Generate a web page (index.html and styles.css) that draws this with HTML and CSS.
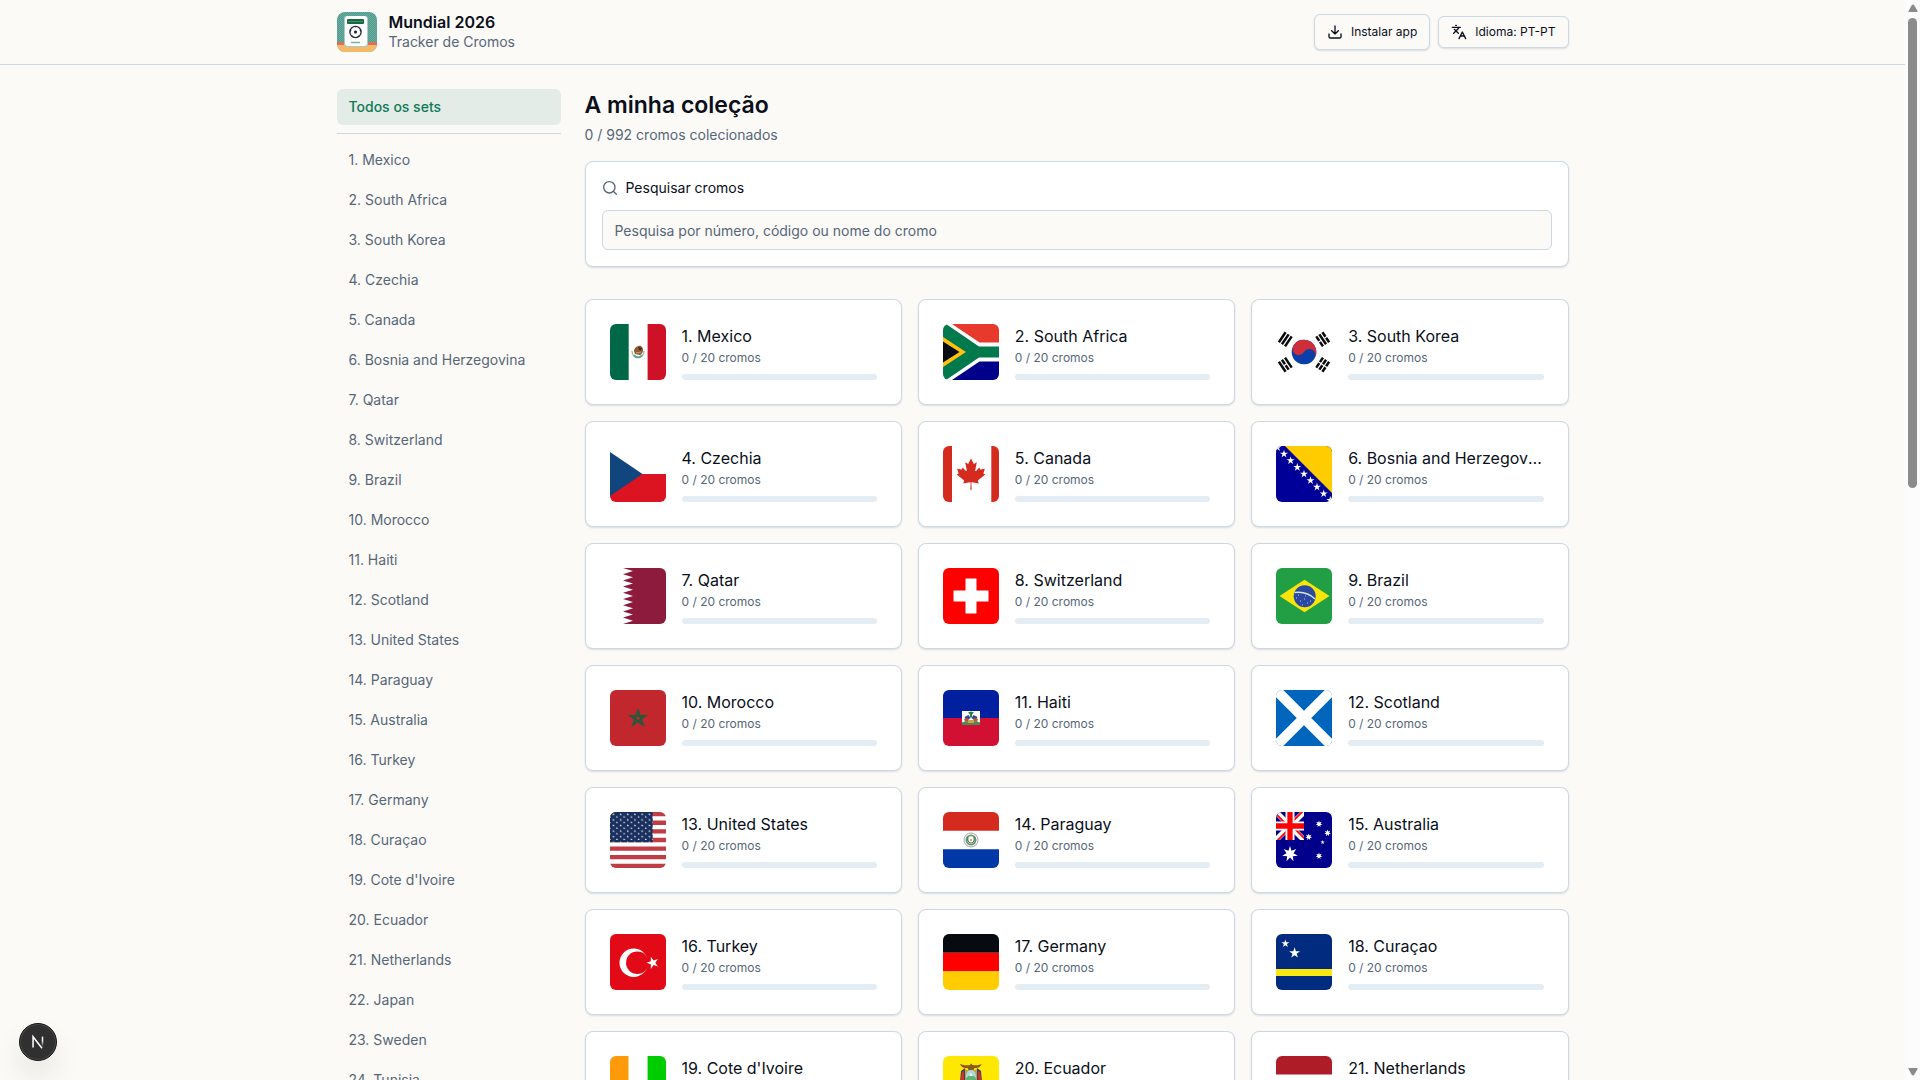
FILE: index.html
```html
<!DOCTYPE html>
<html lang="pt-PT">
<head>
<meta charset="utf-8">
<meta name="viewport" content="width=device-width, initial-scale=1">
<title>Mundial 2026 - Tracker de Cromos</title>
<link rel="stylesheet" href="styles.css">
</head>
<body>
<svg class="defs" aria-hidden="true">
  <defs>
    <polygon id="star5" points="0,-10 2.25,-3.09 9.51,-3.09 3.63,1.18 5.88,8.09 0,3.82 -5.88,8.09 -3.63,1.18 -9.51,-3.09 -2.25,-3.09"/>
    <polygon id="star7" points="0,-10 1.95,-4.05 7.82,-6.23 4.39,-1 9.75,2.23 3.52,2.8 4.34,9.01 0,4.5 -4.34,9.01 -3.52,2.8 -9.75,2.23 -4.39,-1 -7.82,-6.23 -1.95,-4.05"/>
    <pattern id="us-stars" width="7.2" height="5.6" patternUnits="userSpaceOnUse">
      <rect width="7.2" height="5.6" fill="#192f5d"/>
      <use href="#star5" transform="translate(3.4 2.2) scale(.13)" fill="#fff"/>
      <use href="#star5" transform="translate(7 5) scale(.13)" fill="#fff"/>
      <use href="#star5" transform="translate(-.2 5) scale(.13)" fill="#fff"/>
    </pattern>
    <pattern id="weave" width="2" height="2" patternUnits="userSpaceOnUse">
      <rect width="2" height="2" fill="#68ac9f"/>
      <path d="M0 0h1v1H0zM1 1h1v1H1z" fill="#559b90"/>
    </pattern>
  </defs>
</svg>
<div class="page">
  <header class="topbar">
    <div class="container topbar-row">
      <a class="brand" href="#">
        <svg class="brand-logo" viewBox="0 0 40 40" aria-hidden="true">
          <rect width="40" height="40" fill="url(#weave)"/>
          <path d="M0 30h40v3H0z" fill="#d9705c"/>
          <path d="M0 33h40v7H0z" fill="#f6b968"/>
          <rect x="7" y="4" width="24" height="31" rx="3" fill="#a9cdc5"/>
          <rect x="8" y="4" width="22" height="30" rx="3" fill="#fdfefe"/>
          <rect x="10" y="7" width="17" height="5" rx="1" fill="#1c6340"/>
          <path d="M11 9.500h15" stroke="#2f9a62"/>
          <circle cx="18.500" cy="20" r="5.600" fill="#fff" stroke="#22272f" stroke-width="1.300"/>
          <path d="M18.500 18.300l1.700 1.300-.7 2h-2l-.7-2zM17 14.200l1.500 1.300 1.500-1.300zM24 17.600l-1.600 1 1.600 1.400zM13 17.600l1.600 1-1.600 1.400zM15 25l.6-1.800 1.300 2zM22 25l-.6-1.800-1.300 2z" fill="#22272f"/>
          <path d="M14 30.500h9" stroke="#7fb3a8" stroke-width="1.500"/>
        </svg>
        <span class="brand-text">
          <span class="brand-name">Mundial 2026</span>
          <span class="brand-sub">Tracker de Cromos</span>
        </span>
      </a>
      <div class="actions">
        <button class="btn btn-tall" type="button">
          <svg class="icon" viewBox="0 0 24 24" aria-hidden="true"><path d="M12 3v12M7 10l5 5 5-5M21 15v4a2 2 0 0 1-2 2H5a2 2 0 0 1-2-2v-4"/></svg>
          Instalar app
        </button>
        <button class="btn" type="button">
          <svg class="icon" viewBox="0 0 24 24" aria-hidden="true"><path d="m5 8 6 6M4 14l6-6 2-3M2 5h12M7 2h1M22 22l-5-10-5 10M14 18h6"/></svg>
          Idioma: PT-PT
        </button>
      </div>
    </div>
  </header>

  <div class="container layout">
    <nav class="sidebar" aria-label="Sets">
      <a class="side-link side-link-active" href="#">Todos os sets</a>
      <div class="side-list">
        <a class="side-link" href="#">1. Mexico</a>
        <a class="side-link" href="#">2. South Africa</a>
        <a class="side-link" href="#">3. South Korea</a>
        <a class="side-link" href="#">4. Czechia</a>
        <a class="side-link" href="#">5. Canada</a>
        <a class="side-link" href="#">6. Bosnia and Herzegovina</a>
        <a class="side-link" href="#">7. Qatar</a>
        <a class="side-link" href="#">8. Switzerland</a>
        <a class="side-link" href="#">9. Brazil</a>
        <a class="side-link" href="#">10. Morocco</a>
        <a class="side-link" href="#">11. Haiti</a>
        <a class="side-link" href="#">12. Scotland</a>
        <a class="side-link" href="#">13. United States</a>
        <a class="side-link" href="#">14. Paraguay</a>
        <a class="side-link" href="#">15. Australia</a>
        <a class="side-link" href="#">16. Turkey</a>
        <a class="side-link" href="#">17. Germany</a>
        <a class="side-link" href="#">18. Curaçao</a>
        <a class="side-link" href="#">19. Cote d'Ivoire</a>
        <a class="side-link" href="#">20. Ecuador</a>
        <a class="side-link" href="#">21. Netherlands</a>
        <a class="side-link" href="#">22. Japan</a>
        <a class="side-link" href="#">23. Sweden</a>
        <a class="side-link" href="#">24. Tunisia</a>
      </div>
    </nav>

    <main class="main">
      <div class="heading">
        <h1 class="title">A minha coleção</h1>
        <p class="summary">0 / 992 cromos colecionados</p>
      </div>

      <form class="search" role="search">
        <label class="search-label" for="q">
          <svg class="icon icon-muted" viewBox="0 0 24 24" aria-hidden="true"><circle cx="11" cy="11" r="8.500"/><path d="m21.500 21.500-4.500-4.500"/></svg>
          Pesquisar cromos
        </label>
        <input class="search-input" id="q" type="text" placeholder="Pesquisa por número, código ou nome do cromo">
      </form>

      <div class="grid">
        <a class="card" href="#">
          <svg class="flag" viewBox="0 0 56 56" aria-hidden="true"><path fill="#fff" d="M0 0h56v56H0z"/><path fill="#006847" d="M0 0h18.700v56H0z"/><path fill="#ce1126" d="M37.600 0H56v56H37.600z"/><path d="M22 27c0 9 12 9 12 0" fill="none" stroke="#a8b59a" stroke-width="1.300"/><path d="M24 31c2 3 6 3 8 0" fill="none" stroke="#4fa79b" stroke-width="1.500"/><path d="M24 27c0-4 6-7 8-4 2 2 1 7-2 8l-5-1z" fill="#8f5a35"/><path d="M28 23l4 1-2 3z" fill="#3b2718"/><path d="M26 29l5-1" stroke="#c8a878"/></svg>
          <div class="info"><h2 class="name">1. Mexico</h2><p class="count">0 / 20 cromos</p><div class="bar" role="progressbar" aria-valuenow="0" aria-valuemax="20"></div></div>
        </a>
        <a class="card" href="#">
          <svg class="flag" viewBox="0 0 56 56" aria-hidden="true"><path fill="#fff" d="M0 0h56v56H0z"/><path fill="#e8392d" d="M9 0h47v18.500H36.500z"/><path fill="#00008b" d="M9 56h47V37.500H36.500z"/><path fill="#007a4d" d="M0 0h3l33 22.500h20v11H36L3 56H0z"/><path fill="#ffc20e" d="M0 13l23 15L0 43z"/><path fill="#070b12" d="M0 17.500L16.500 28 0 38.500z"/></svg>
          <div class="info"><h2 class="name">2. South Africa</h2><p class="count">0 / 20 cromos</p><div class="bar" role="progressbar" aria-valuenow="0" aria-valuemax="20"></div></div>
        </a>
        <a class="card" href="#">
          <svg class="flag" viewBox="0 0 56 56" aria-hidden="true"><path fill="#fff" d="M0 0h56v56H0z"/><g transform="rotate(30 28 28)"><circle cx="28" cy="28" r="12.300" fill="#0a3ea8"/><path fill="#cd2e3a" d="M15.700 28a12.300 12.300 0 0 1 24.600 0 6.150 6.150 0 0 0-12.300 0 6.150 6.150 0 0 1-12.300 0z"/></g><g stroke="#0b0b0f" stroke-width="2.500"><path transform="translate(9.300 15.300) rotate(-56)" d="M-6-3.700H6M-6 0H6M-6 3.700H6"/><path transform="translate(46.700 40.700) rotate(-56)" d="M-6-3.700h5.400M.6-3.700H6M-6 0h5.400M.6 0H6M-6 3.700h5.400M.6 3.700H6"/><path transform="translate(46.700 15.300) rotate(56)" d="M-6-3.700h5.400M.6-3.700H6M-6 0H6M-6 3.700h5.400M.6 3.700H6"/><path transform="translate(9.300 40.700) rotate(56)" d="M-6-3.700H6M-6 0h5.400M.6 0H6M-6 3.700H6"/></g></svg>
          <div class="info"><h2 class="name">3. South Korea</h2><p class="count">0 / 20 cromos</p><div class="bar" role="progressbar" aria-valuenow="0" aria-valuemax="20"></div></div>
        </a>
        <a class="card" href="#">
          <svg class="flag" viewBox="0 0 56 56" aria-hidden="true"><path fill="#fff" d="M0 0h56v28H0z"/><path fill="#dc1320" d="M0 28h56v28H0z"/><path fill="#11457e" d="M0 6l32.500 22L0 50z"/></svg>
          <div class="info"><h2 class="name">4. Czechia</h2><p class="count">0 / 20 cromos</p><div class="bar" role="progressbar" aria-valuenow="0" aria-valuemax="20"></div></div>
        </a>
        <a class="card" href="#">
          <svg class="flag" viewBox="0 0 56 56" aria-hidden="true"><path fill="#fff" d="M0 0h56v56H0z"/><path fill="#d52b1e" d="M0 0h9v56H0zM48.300 0H56v56h-7.700z"/><path fill="#d52b1e" transform="translate(28 28) scale(.0077)" d="m-90 2030 45-863a95 95 0 0 0-111-98l-859 151 116-320a65 65 0 0 0-20-73l-941-762 212-99a65 65 0 0 0 34-79l-186-572 542 115a65 65 0 0 0 73-38l105-247 423 454a65 65 0 0 0 111-57l-204-1052 327 189a65 65 0 0 0 91-27l332-652 332 652a65 65 0 0 0 91 27l327-189-204 1052a65 65 0 0 0 111 57l423-454 105 247a65 65 0 0 0 73 38l542-115-186 572a65 65 0 0 0 34 79l212 99-941 762a65 65 0 0 0-20 73l116 320-859-151a95 95 0 0 0-111 98l45 863z"/></svg>
          <div class="info"><h2 class="name">5. Canada</h2><p class="count">0 / 20 cromos</p><div class="bar" role="progressbar" aria-valuenow="0" aria-valuemax="20"></div></div>
        </a>
        <a class="card" href="#">
          <svg class="flag" viewBox="0 0 56 56" aria-hidden="true"><path fill="#009" d="M0 0h56v56H0z"/><path fill="#fc0" d="M9 0h47v47z"/><g fill="#fff"><use href="#star5" transform="translate(1.500 1.500) scale(.42)"/><use href="#star5" transform="translate(8 8) scale(.42)"/><use href="#star5" transform="translate(14.600 14.600) scale(.42)"/><use href="#star5" transform="translate(21.300 21.300) scale(.42)"/><use href="#star5" transform="translate(28 28) scale(.42)"/><use href="#star5" transform="translate(34.500 34.500) scale(.42)"/><use href="#star5" transform="translate(41 41) scale(.42)"/><use href="#star5" transform="translate(47.700 47.700) scale(.42)"/><use href="#star5" transform="translate(54.300 54.300) scale(.42)"/></g></svg>
          <div class="info"><h2 class="name">6. Bosnia and Herzegovina</h2><p class="count">0 / 20 cromos</p><div class="bar" role="progressbar" aria-valuenow="0" aria-valuemax="20"></div></div>
        </a>
        <a class="card" href="#">
          <svg class="flag" viewBox="0 0 56 56" aria-hidden="true"><path fill="#fff" d="M0 0h56v56H0z"/><path fill="#8d1b3d" d="M56 0H13l10 3.100-10 3.100 10 3.100-10 3.100 10 3.100-10 3.100 10 3.100-10 3.100 10 3.100-10 3.100 10 3.100-10 3.100 10 3.100-10 3.100 10 3.100-10 3.100 10 3.100-10 3.200h43z"/></svg>
          <div class="info"><h2 class="name">7. Qatar</h2><p class="count">0 / 20 cromos</p><div class="bar" role="progressbar" aria-valuenow="0" aria-valuemax="20"></div></div>
        </a>
        <a class="card" href="#">
          <svg class="flag" viewBox="0 0 56 56" aria-hidden="true"><path fill="red" d="M0 0h56v56H0z"/><path fill="#fff" d="M22.500 10.500h11v12h12v11h-12v12h-11v-12h-12v-11h12z"/></svg>
          <div class="info"><h2 class="name">8. Switzerland</h2><p class="count">0 / 20 cromos</p><div class="bar" role="progressbar" aria-valuenow="0" aria-valuemax="20"></div></div>
        </a>
        <a class="card" href="#">
          <svg class="flag" viewBox="0 0 56 56" aria-hidden="true"><path fill="#229e45" d="M0 0h56v56H0z"/><path fill="#f8e509" d="M3.500 28l25-16.300 25 16.300-25 16.300z"/><circle cx="28.700" cy="28.200" r="11" fill="#2b49a3"/><path d="M18.500 24.500c7-1 15 1 20.500 6.500" fill="none" stroke="#d8e6da" stroke-width="1.500"/><path d="M20 30h1M24 33h1M28 31h1M31 35h1M26 37h1M34 33h1M29 28h1M22 27h1" stroke="#b9c5e6"/></svg>
          <div class="info"><h2 class="name">9. Brazil</h2><p class="count">0 / 20 cromos</p><div class="bar" role="progressbar" aria-valuenow="0" aria-valuemax="20"></div></div>
        </a>
        <a class="card" href="#">
          <svg class="flag" viewBox="0 0 56 56" aria-hidden="true"><path fill="#c1272d" d="M0 0h56v56H0z"/><path fill="none" stroke="#1d5b3a" stroke-width="1.800" d="M28 20.500l4.900 14.200-12.300-8.900h14.800l-12.300 8.900z"/></svg>
          <div class="info"><h2 class="name">10. Morocco</h2><p class="count">0 / 20 cromos</p><div class="bar" role="progressbar" aria-valuenow="0" aria-valuemax="20"></div></div>
        </a>
        <a class="card" href="#">
          <svg class="flag" viewBox="0 0 56 56" aria-hidden="true"><path fill="#00209f" d="M0 0h56v28H0z"/><path fill="#d21034" d="M0 28h56v28H0z"/><path fill="#fff" d="M19 21h18v14H19z"/><path fill="#4d8a50" d="M19 32.500c5-2 13-2 18 0V35H19z"/><path fill="#2c7a45" d="M25 22.500l3-1 3 1-2 2v3h-2v-3z"/><path fill="#3a4488" d="M21.500 27l4-2 2 3-4 3zM34.500 27l-4-2-2 3 4 3z"/><path fill="#b5563f" d="M21 29l4-1 1 3-4 1zM35 29l-4-1-1 3 4 1z"/><path fill="#c5a44a" d="M25 30h6v3h-6z"/></svg>
          <div class="info"><h2 class="name">11. Haiti</h2><p class="count">0 / 20 cromos</p><div class="bar" role="progressbar" aria-valuenow="0" aria-valuemax="20"></div></div>
        </a>
        <a class="card" href="#">
          <svg class="flag" viewBox="0 0 56 56" aria-hidden="true"><path fill="#0065bd" d="M0 0h56v56H0z"/><path stroke="#fff" stroke-width="10.200" d="M-2-2l60 60M58-2L-2 58"/></svg>
          <div class="info"><h2 class="name">12. Scotland</h2><p class="count">0 / 20 cromos</p><div class="bar" role="progressbar" aria-valuenow="0" aria-valuemax="20"></div></div>
        </a>
        <a class="card" href="#">
          <svg class="flag" viewBox="0 0 56 56" aria-hidden="true"><path fill="#fff" d="M0 0h56v56H0z"/><path stroke="#bf3d45" stroke-width="4.300" d="M0 2.150h56M0 10.750h56M0 19.400h56M0 28h56M0 36.600h56M0 45.200h56M0 53.850h56"/><path fill="url(#us-stars)" d="M0 0h42.700v30.200H0z"/></svg>
          <div class="info"><h2 class="name">13. United States</h2><p class="count">0 / 20 cromos</p><div class="bar" role="progressbar" aria-valuenow="0" aria-valuemax="20"></div></div>
        </a>
        <a class="card" href="#">
          <svg class="flag" viewBox="0 0 56 56" aria-hidden="true"><path fill="#fff" d="M0 0h56v56H0z"/><path fill="#d52b1e" d="M0 0h56v18.700H0z"/><path fill="#0038a8" d="M0 37.300h56V56H0z"/><circle cx="28" cy="28" r="7" fill="none" stroke="#8b938c" stroke-width=".8"/><circle cx="28" cy="28" r="4.600" fill="none" stroke="#74907c" stroke-width="1.800"/><path d="M25 25c-1 4 1 6 3 6s4-2 3-6" fill="none" stroke="#2d8054" stroke-width="1.200"/><circle cx="28" cy="28" r="1.200" fill="#e2b53a"/></svg>
          <div class="info"><h2 class="name">14. Paraguay</h2><p class="count">0 / 20 cromos</p><div class="bar" role="progressbar" aria-valuenow="0" aria-valuemax="20"></div></div>
        </a>
        <a class="card" href="#">
          <svg class="flag" viewBox="0 0 56 56" aria-hidden="true"><path fill="#00008b" d="M0 0h56v56H0z"/><svg width="28" height="28"><path stroke="#fff" stroke-width="5.600" d="M0 0l28 28M28 0L0 28"/><path stroke="red" stroke-width="1.800" d="M-1 1l14 14M29 27L15 13M27-1L13 13M1 29l14-14"/><path stroke="#fff" stroke-width="9" d="M14 0v28M0 14h28"/><path stroke="red" stroke-width="5.300" d="M14 0v28M0 14h28"/></svg><g fill="#fff"><use href="#star7" transform="translate(14 42) scale(.8)"/><use href="#star7" transform="translate(43 12) scale(.35)"/><use href="#star7" transform="translate(51.600 21) scale(.35)"/><use href="#star7" transform="translate(32.700 25) scale(.35)"/><use href="#star5" transform="translate(46.600 30.300) scale(.22)"/><use href="#star7" transform="translate(43 44) scale(.35)"/></g></svg>
          <div class="info"><h2 class="name">15. Australia</h2><p class="count">0 / 20 cromos</p><div class="bar" role="progressbar" aria-valuenow="0" aria-valuemax="20"></div></div>
        </a>
        <a class="card" href="#">
          <svg class="flag" viewBox="0 0 56 56" aria-hidden="true"><path fill="#e30a17" d="M0 0h56v56H0z"/><circle cx="23.700" cy="28.800" r="14.200" fill="#fff"/><circle cx="27.300" cy="28.800" r="11.300" fill="#e30a17"/><use href="#star5" transform="translate(42.800 28.800) rotate(-90) scale(.64)" fill="#fff"/></svg>
          <div class="info"><h2 class="name">16. Turkey</h2><p class="count">0 / 20 cromos</p><div class="bar" role="progressbar" aria-valuenow="0" aria-valuemax="20"></div></div>
        </a>
        <a class="card" href="#">
          <svg class="flag" viewBox="0 0 56 56" aria-hidden="true"><path fill="#070a0f" d="M0 0h56v18.700H0z"/><path fill="red" d="M0 18.700h56v18.700H0z"/><path fill="#fc0" d="M0 37.300h56V56H0z"/></svg>
          <div class="info"><h2 class="name">17. Germany</h2><p class="count">0 / 20 cromos</p><div class="bar" role="progressbar" aria-valuenow="0" aria-valuemax="20"></div></div>
        </a>
        <a class="card" href="#">
          <svg class="flag" viewBox="0 0 56 56" aria-hidden="true"><path fill="#002b7f" d="M0 0h56v56H0z"/><path fill="#f9e814" d="M0 35h56v7H0z"/><g fill="#fff"><use href="#star5" transform="translate(9.400 9.600) scale(.42)"/><use href="#star5" transform="translate(18.600 19) scale(.57)"/></g></svg>
          <div class="info"><h2 class="name">18. Curaçao</h2><p class="count">0 / 20 cromos</p><div class="bar" role="progressbar" aria-valuenow="0" aria-valuemax="20"></div></div>
        </a>
        <a class="card" href="#">
          <svg class="flag" viewBox="0 0 56 56" aria-hidden="true"><path fill="#fff" d="M0 0h56v56H0z"/><path fill="#ff9a0a" d="M0 0h18.500v56H0z"/><path fill="#00cd00" d="M37.600 0H56v56H37.600z"/></svg>
          <div class="info"><h2 class="name">19. Cote d'Ivoire</h2><p class="count">0 / 20 cromos</p><div class="bar" role="progressbar" aria-valuenow="0" aria-valuemax="20"></div></div>
        </a>
        <a class="card" href="#">
          <svg class="flag" viewBox="0 0 56 56" aria-hidden="true"><path fill="#ffe800" d="M0 0h56v28H0z"/><path fill="#0072c6" d="M0 28h56v14H0z"/><path fill="#e2001a" d="M0 42h56v14H0z"/><path fill="#8a5a1c" d="M17 8c5 2 8 1 10 1l1-1.500 1.500 1.500c2 0 5 1 9-1-1 4-5 4-7 4l-1 2h-5l-1-2c-3 0-6 0-7.500-4z"/><path fill="#3a3f7a" d="M18 15l4-3 2 14h-7zM38 15l-4-3-2 14h7z"/><path fill="#c4352f" d="M19 16l2-1v11h-4zM37 16l-2-1v11h4z"/><path fill="#c9a227" d="M22 14h12v14H22z"/><path fill="#a6dbe6" d="M28 14c4 0 5 4 5 8v6H23v-6c0-4 1-8 5-8z"/><path fill="#5fb36a" d="M23 22l5-4 5 4v6H23z"/><path fill="#fff" d="M26 20l2-3 2 3z"/></svg>
          <div class="info"><h2 class="name">20. Ecuador</h2><p class="count">0 / 20 cromos</p><div class="bar" role="progressbar" aria-valuenow="0" aria-valuemax="20"></div></div>
        </a>
        <a class="card" href="#">
          <svg class="flag" viewBox="0 0 56 56" aria-hidden="true"><path fill="#fff" d="M0 0h56v56H0z"/><path fill="#ae1c28" d="M0 0h56v18.500H0z"/><path fill="#21468b" d="M0 37.300h56V56H0z"/></svg>
          <div class="info"><h2 class="name">21. Netherlands</h2><p class="count">0 / 20 cromos</p><div class="bar" role="progressbar" aria-valuenow="0" aria-valuemax="20"></div></div>
        </a>
      </div>
    </main>
  </div>
</div>

<div class="scrollbar" aria-hidden="true">
  <svg class="scroll-arrow" viewBox="0 0 10 8"><path d="M4 .8h2L9.500 7v1h-9V7z"/></svg>
  <div class="scroll-track"><div class="scroll-thumb"></div></div>
  <svg class="scroll-arrow" viewBox="0 0 10 8"><path d="M.5 0h9v1L6 7.200H4L.5 1z"/></svg>
</div>

<button class="dev-badge" type="button" aria-label="Next.js">
  <svg viewBox="0 0 40 40" aria-hidden="true">
    <defs>
      <linearGradient id="fade-a" x1="0" y1="0" x2="0" y2="1"><stop offset=".4" stop-color="#fff"/><stop offset="1" stop-color="#fff" stop-opacity="0"/></linearGradient>
    </defs>
    <path d="M14.500 26V14.200L24.500 27" fill="none" stroke="#fff" stroke-width="1.700"/>
    <path d="M24.200 14h1.600v11h-1.600z" fill="url(#fade-a)"/>
  </svg>
</button>
</body>
</html>
```
FILE: styles.css
```css
:root {
  --bg: #fcfaf7;
  --text: #0a0f1a;
  --muted: #566778;
  --line: #cbd8e5;
  --track: #e4ecf4;
  --accent: #0f7a5a;
  --shadow: 0 1px 2px rgba(15, 40, 70, .14);
}

* {
  box-sizing: border-box;
}

body {
  margin: 0;
  background: var(--bg);
  color: var(--text);
  font-family: Inter, "Liberation Sans", sans-serif;
  font-size: 14px;
  line-height: 20px;
}

h1, h2, p {
  margin: 0;
}

a {
  color: inherit;
  text-decoration: none;
}

.defs {
  position: absolute;
  width: 0;
  height: 0;
}

.page {
  height: 100vh;
  margin-right: 15px;
  overflow: hidden auto;
  scrollbar-width: none;
}

.container {
  max-width: 1280px;
  margin: 0 auto;
  padding: 0 24px;
}

/* Top bar */
.topbar {
  border-bottom: 1px solid var(--line);
}

.topbar-row {
  display: flex;
  align-items: center;
  justify-content: space-between;
  height: 64px;
}

.brand {
  display: flex;
  align-items: center;
  gap: 12px;
}

.brand-logo {
  width: 40px;
  height: 40px;
  border-radius: 8px;
}

.brand-text {
  display: flex;
  flex-direction: column;
}

.brand-name {
  font-size: 16px;
  font-weight: 600;
}

.brand-sub {
  color: var(--muted);
}

.actions {
  display: flex;
  align-items: center;
  gap: 8px;
}

.btn {
  display: flex;
  align-items: center;
  gap: 8px;
  height: 32px;
  padding: 0 12px;
  border: 1px solid var(--line);
  border-radius: 6px;
  background: var(--bg);
  box-shadow: var(--shadow);
  color: var(--text);
  font: 400 12px/16px Inter, "Liberation Sans", sans-serif;
}

.btn-tall {
  height: 36px;
}

.icon {
  width: 16px;
  height: 16px;
  fill: none;
  stroke: currentColor;
  stroke-width: 2;
  stroke-linecap: round;
  stroke-linejoin: round;
}

.icon-muted {
  color: var(--muted);
}

/* Page columns */
.layout {
  display: grid;
  grid-template-columns: 224px minmax(0, 1fr);
  gap: 24px;
  padding-top: 24px;
  padding-bottom: 24px;
}

.sidebar {
  display: flex;
  flex-direction: column;
  gap: 8px;
}

.side-list {
  display: flex;
  flex-direction: column;
  gap: 4px;
  padding-top: 8px;
  border-top: 1px solid var(--line);
}

.side-link {
  padding: 8px 12px;
  border-radius: 6px;
  color: var(--muted);
}

.side-link-active {
  background: #e3ece6;
  color: var(--accent);
  font-weight: 500;
}

.main {
  display: flex;
  flex-direction: column;
}

.heading {
  display: flex;
  flex-direction: column;
  gap: 4px;
}

.title {
  font-size: 23px;
  font-weight: 600;
  line-height: 32px;
}

.summary {
  color: var(--muted);
}

/* Search */
.search {
  display: flex;
  flex-direction: column;
  gap: 12px;
  margin: 16px 0 32px;
  padding: 16px;
  border: 1px solid var(--line);
  border-radius: 8px;
  background: #fff;
  box-shadow: var(--shadow);
}

.search-label {
  display: flex;
  align-items: center;
  gap: 8px;
}

.search-input {
  width: 100%;
  height: 40px;
  padding: 0 12px;
  border: 1px solid var(--line);
  border-radius: 6px;
  background: var(--bg);
  color: var(--text);
  font: inherit;
}

.search-input::placeholder {
  color: var(--muted);
  opacity: 1;
}

/* Set cards */
.grid {
  display: grid;
  grid-template-columns: repeat(3, minmax(0, 1fr));
  gap: 16px;
}

.card {
  display: flex;
  gap: 16px;
  padding: 24px;
  border: 1px solid var(--line);
  border-radius: 8px;
  background: #fff;
  box-shadow: var(--shadow);
}

.flag {
  flex: none;
  width: 56px;
  height: 56px;
  border-radius: 6px;
}

.info {
  flex: 1;
  min-width: 0;
}

.name {
  overflow: hidden;
  font-size: 16px;
  font-weight: 400;
  line-height: 24px;
  text-overflow: ellipsis;
  white-space: nowrap;
}

.count {
  margin: 2px 0 8px;
  color: var(--muted);
  font-size: 12px;
  line-height: 16px;
}

.bar {
  height: 6px;
  border-radius: 3px;
  background: var(--track);
}

/* Scrollbar */
.scrollbar {
  position: fixed;
  inset: 0 0 0 auto;
  display: flex;
  flex-direction: column;
  align-items: center;
  width: 15px;
  padding: 4px 0;
  background: #fcfcfc;
}

.scroll-arrow {
  width: 10px;
  height: 8px;
  fill: #8b8b8b;
}

.scroll-track {
  flex: 1;
  width: 9px;
  padding: 6px 0;
}

.scroll-thumb {
  height: 45%;
  border-radius: 5px;
  background: #8b8b8b;
}

.dev-badge {
  position: fixed;
  bottom: 19px;
  left: 19px;
  width: 38px;
  height: 38px;
  padding: 0;
  border: 1px solid #161616;
  border-radius: 50%;
  background: #303030;
  box-shadow: inset 0 0 0 1px #4a4a4a, 0 16px 32px -8px rgba(0, 0, 0, .24);
}

.dev-badge svg {
  display: block;
}
```
